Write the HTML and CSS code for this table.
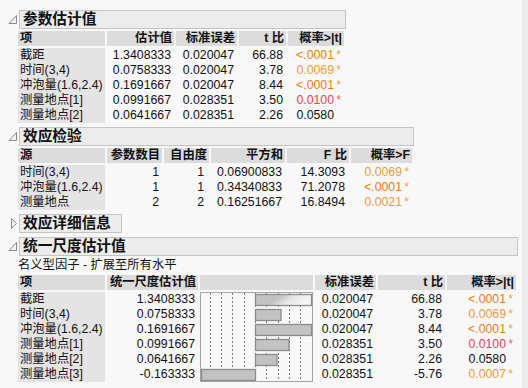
FILE: index.html
```html
<!DOCTYPE html>
<html lang="zh-CN">
<head>
<meta charset="utf-8">
<title>参数估计值</title>
<link rel="stylesheet" href="styles.css">
</head>
<body>
<div class="main">

  <section class="outline">
    <div class="outline-head">
      <svg class="disclose" width="11" height="19" viewBox="0 0 11 19"><polygon points="1,13.5 8.5,5.5 8.5,13.5" fill="#f2f2f2" stroke="#8a8a8a" stroke-width="1"/></svg>
      <div class="title">参数估计值</div>
    </div>
    <div class="content">
      <table class="t1">
        <colgroup><col class="w87"><col class="w67"><col class="w61"><col class="w47"><col class="w56"></colgroup>
        <thead><tr><th class="l">项</th><th>估计值</th><th>标准误差</th><th>t 比</th><th>概率&gt;|t|</th></tr></thead>
        <tbody>
          <tr><td class="term">截距</td><td>1.3408333</td><td>0.020047</td><td>66.88</td><td class="p"><span class="sig1">&lt;.0001<span class="star">*</span></span></td></tr>
          <tr><td class="term">时间(3,4)</td><td>0.0758333</td><td>0.020047</td><td>3.78</td><td class="p"><span class="sig2">0.0069<span class="star">*</span></span></td></tr>
          <tr><td class="term">冲泡量(1.6,2.4)</td><td>0.1691667</td><td>0.020047</td><td>8.44</td><td class="p"><span class="sig1">&lt;.0001<span class="star">*</span></span></td></tr>
          <tr><td class="term">测量地点[1]</td><td>0.0991667</td><td>0.028351</td><td>3.50</td><td class="p"><span class="sig3">0.0100<span class="star">*</span></span></td></tr>
          <tr><td class="term">测量地点[2]</td><td>0.0641667</td><td>0.028351</td><td>2.26</td><td class="p">0.0580<span class="star none">*</span></td></tr>
        </tbody>
      </table>
    </div>
  </section>

  <section class="outline">
    <div class="outline-head">
      <svg class="disclose" width="11" height="19" viewBox="0 0 11 19"><polygon points="1,13.5 8.5,5.5 8.5,13.5" fill="#f2f2f2" stroke="#8a8a8a" stroke-width="1"/></svg>
      <div class="title">效应检验</div>
    </div>
    <div class="content">
      <table class="t2">
        <colgroup><col class="w87"><col class="w55"><col class="w45"><col class="w74"><col class="w62"><col class="w61"></colgroup>
        <thead><tr><th class="l">源</th><th>参数数目</th><th>自由度</th><th>平方和</th><th>F 比</th><th>概率&gt;F</th></tr></thead>
        <tbody>
          <tr><td class="term">时间(3,4)</td><td>1</td><td class="df">1</td><td>0.06900833</td><td class="fr">14.3093</td><td class="p"><span class="sig2">0.0069<span class="star">*</span></span></td></tr>
          <tr><td class="term">冲泡量(1.6,2.4)</td><td>1</td><td class="df">1</td><td>0.34340833</td><td class="fr">71.2078</td><td class="p"><span class="sig1">&lt;.0001<span class="star">*</span></span></td></tr>
          <tr><td class="term">测量地点</td><td>2</td><td class="df">2</td><td>0.16251667</td><td class="fr">16.8494</td><td class="p"><span class="sig2">0.0021<span class="star">*</span></span></td></tr>
        </tbody>
      </table>
    </div>
  </section>

  <section class="outline">
    <div class="outline-head">
      <svg class="disclose" width="11" height="19" viewBox="0 0 11 19"><polygon points="3.5,4.5 3.5,14.5 8.5,9.5" fill="#f2f2f2" stroke="#8a8a8a" stroke-width="1"/></svg>
      <div class="title closed">效应详细信息</div>
    </div>
  </section>

  <section class="outline">
    <div class="outline-head">
      <svg class="disclose" width="11" height="19" viewBox="0 0 11 19"><polygon points="1,13.5 8.5,5.5 8.5,13.5" fill="#f2f2f2" stroke="#8a8a8a" stroke-width="1"/></svg>
      <div class="title">统一尺度估计值</div>
    </div>
    <div class="content">
      <div class="subtitle">名义型因子 - 扩展至所有水平</div>
      <table class="t3">
        <colgroup><col class="w87"><col class="w91"><col class="w113"><col class="w61"><col class="w67"><col class="w69"></colgroup>
        <thead><tr><th class="l">项</th><th>统一尺度估计值</th><th></th><th>标准误差</th><th>t 比</th><th>概率&gt;|t|</th></tr></thead>
        <tbody>
          <tr><td class="term">截距</td><td>1.3408333</td>
            <td class="chart" rowspan="6">
              <svg width="113" height="90" viewBox="0 0 113 90">
                <defs>
                  <linearGradient id="fade" x1="0" y1="0" x2="1" y2="0.3">
                    <stop offset="0" stop-color="#c2c2c2"/>
                    <stop offset="0.45" stop-color="#c2c2c2"/>
                    <stop offset="0.7" stop-color="#e6e6e6"/>
                    <stop offset="1" stop-color="#f6f6f6"/>
                  </linearGradient>
                </defs>
                <rect x="0.5" y="0.5" width="112" height="89" fill="#f8f8f8" stroke="#a4a4a4"/>
                <g stroke="#7a7a7a" stroke-width="1" stroke-dasharray="2 2">
                  <line x1="10.5" y1="1" x2="10.5" y2="89"/>
                  <line x1="21.5" y1="1" x2="21.5" y2="89"/>
                  <line x1="32.5" y1="1" x2="32.5" y2="89"/>
                  <line x1="44.5" y1="1" x2="44.5" y2="89"/>
                  <line x1="55.5" y1="1" x2="55.5" y2="89"/>
                  <line x1="66.5" y1="1" x2="66.5" y2="89"/>
                  <line x1="78.5" y1="1" x2="78.5" y2="89"/>
                  <line x1="89.5" y1="1" x2="89.5" y2="89"/>
                  <line x1="100.5" y1="1" x2="100.5" y2="89"/>
                </g>
                <g stroke="#8c8c8c" stroke-width="1.3" fill="#c2c2c2">
                  <rect x="55.5" y="2.5" width="56" height="11" fill="url(#fade)"/>
                  <rect x="55.5" y="17.5" width="25.5" height="11"/>
                  <rect x="55.5" y="32.5" width="56" height="11"/>
                  <rect x="55.5" y="47.5" width="33.5" height="11"/>
                  <rect x="55.5" y="62.5" width="21.5" height="11"/>
                  <rect x="1.5" y="77.5" width="54" height="11"/>
                </g>
              </svg>
            </td>
            <td>0.020047</td><td>66.88</td><td class="p"><span class="sig1">&lt;.0001<span class="star">*</span></span></td></tr>
          <tr><td class="term">时间(3,4)</td><td>0.0758333</td><td>0.020047</td><td>3.78</td><td class="p"><span class="sig2">0.0069<span class="star">*</span></span></td></tr>
          <tr><td class="term">冲泡量(1.6,2.4)</td><td>0.1691667</td><td>0.020047</td><td>8.44</td><td class="p"><span class="sig1">&lt;.0001<span class="star">*</span></span></td></tr>
          <tr><td class="term">测量地点[1]</td><td>0.0991667</td><td>0.028351</td><td>3.50</td><td class="p"><span class="sig3">0.0100<span class="star">*</span></span></td></tr>
          <tr><td class="term">测量地点[2]</td><td>0.0641667</td><td>0.028351</td><td>2.26</td><td class="p">0.0580<span class="star none">*</span></td></tr>
          <tr><td class="term">测量地点[3]</td><td>-0.163333</td><td>0.028351</td><td>-5.76</td><td class="p"><span class="sig2">0.0007<span class="star">*</span></span></td></tr>
        </tbody>
      </table>
    </div>
  </section>

</div>
<div class="edge"></div>
</body>
</html>
```

FILE: styles.css
```css
html, body {
  margin: 0;
  padding: 0;
}

body {
  background: #f8f8f8;
  color: #111;
  font-family: "Liberation Sans", "Noto Sans CJK SC", sans-serif;
  font-size: 12.3px;
  display: flex;
  min-height: 388px;
  overflow: hidden;
}

.main {
  flex: 1;
  padding: 10px 0 0 8px;
}

.edge {
  width: 6px;
  background: #ebebeb;
}

.outline {
  width: fit-content;
}

.outline + .outline {
  margin-top: 4px;
}

.outline-head {
  display: flex;
}

.disclose {
  display: block;
  flex: none;
}

.title {
  flex: 1;
  height: 17px;
  line-height: 17px;
  border: 1px solid #c4c4c4;
  background: #ececec;
  font-family: "Liberation Sans", "Noto Sans CJK SC", sans-serif;
  font-weight: bold;
  font-size: 14.67px;
  color: #111;
  padding: 0 3px;
  white-space: nowrap;
}

.title.closed {
  padding-right: 10px;
}

.content {
  margin-left: 8px;
}

.subtitle {
  height: 19px;
  line-height: 19px;
  padding-left: 2px;
  white-space: nowrap;
}

table {
  border-collapse: separate;
  border-spacing: 2px 0;
  table-layout: fixed;
  margin: 2px 0 1px;
}

.subtitle + table {
  margin-top: 0;
}

.t1 { width: 330px; }
.t2 { width: 398px; }
.t3 { width: 502px; }

.w45 { width: 45px; }
.w47 { width: 47px; }
.w55 { width: 55px; }
.w56 { width: 56px; }
.w61 { width: 61px; }
.w62 { width: 62px; }
.w67 { width: 67px; }
.w69 { width: 69px; }
.w74 { width: 74px; }
.w87 { width: 87px; }
.w91 { width: 91px; }
.w113 { width: 113px; }

th {
  height: 15px;
  line-height: 15px;
  padding: 0 2px 0 0;
  background: #dcdcdc;
  background-clip: padding-box;
  border-bottom: 2px solid #f8f8f8;
  font-weight: bold;
  text-align: right;
  white-space: nowrap;
  overflow: hidden;
  color: #111;
}

th.l {
  text-align: left;
  padding: 0 0 0 2px;
}

td {
  height: 15px;
  line-height: 15px;
  padding: 0 3px 0 0;
  text-align: right;
  white-space: nowrap;
}

td.term {
  background: #e4e4e4;
  text-align: left;
  padding: 0 0 0 2px;
}

td.p {
  padding-right: 3px;
}

.t2 td.df {
  padding-right: 5px;
}

.t2 td.fr {
  padding-right: 4px;
}

td.chart {
  padding: 0;
  vertical-align: top;
}

td.chart svg {
  display: block;
}

.star {
  display: inline-block;
  width: 7px;
  text-align: right;
}

.star.none {
  visibility: hidden;
}

.sig1 { color: #f07d12; }
.sig2 { color: #f39a38; }
.sig3 { color: #f23a5e; }

.sig1 .star, .sig2 .star { color: #f5a650; }
.sig3 .star { color: #f5607a; }
```
